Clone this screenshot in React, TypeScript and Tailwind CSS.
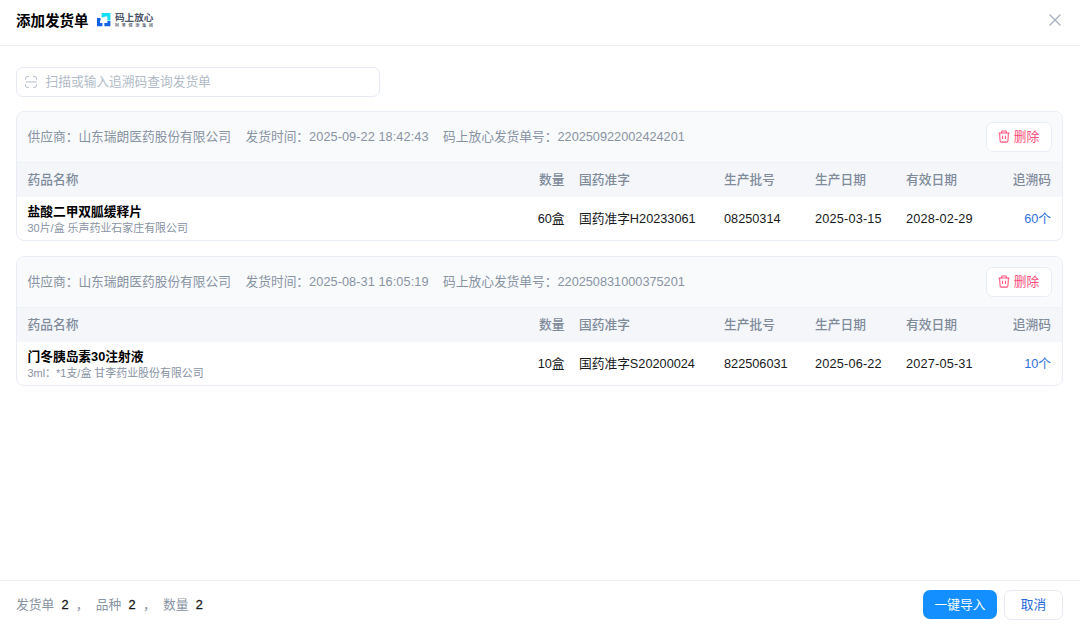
import React from "react";

type Drug = {
  name: string;
  spec: string;
  qty: string;
  approval: string;
  batch: string;
  made: string;
  expires: string;
  codes: string;
};

type Shipment = {
  supplier: string;
  time: string;
  number: string;
  drugs: Drug[];
};

const shipments: Shipment[] = [
  {
    supplier: "山东瑞朗医药股份有限公司",
    time: "2025-09-22 18:42:43",
    number: "220250922002424201",
    drugs: [
      {
        name: "盐酸二甲双胍缓释片",
        spec: "30片/盒 乐声药业石家庄有限公司",
        qty: "60盒",
        approval: "国药准字H20233061",
        batch: "08250314",
        made: "2025-03-15",
        expires: "2028-02-29",
        codes: "60个",
      },
    ],
  },
  {
    supplier: "山东瑞朗医药股份有限公司",
    time: "2025-08-31 16:05:19",
    number: "220250831000375201",
    drugs: [
      {
        name: "门冬胰岛素30注射液",
        spec: "3ml：*1支/盒 甘李药业股份有限公司",
        qty: "10盒",
        approval: "国药准字S20200024",
        batch: "822506031",
        made: "2025-06-22",
        expires: "2027-05-31",
        codes: "10个",
      },
    ],
  },
];

const columns =
  "grid grid-cols-[minmax(0,1fr)_60px_145px_91px_91px_152px] items-center pl-[10.5px] pr-[11px]";

function Logo() {
  return (
    <div className="flex items-center">
      <svg width="14" height="14" viewBox="0 0 14 14" fill="none">
        <path d="M4.6 0H13.4V7.6H10.4V3.4H7.4V4.2H4.6Z" fill="#12dff5" />
        <path d="M0 5H3.6V7.4H3V10H5.4V13.2H0Z" fill="#1262e6" />
        <path d="M10.4 7.9H13.4V13.2H7.4V10H10.4Z" fill="#1262e6" />
      </svg>
      <div className="ml-[4.5px] flex flex-col whitespace-nowrap text-[#4a5368]">
        <span className="text-[9.6px] leading-[10px] font-bold">码上放心</span>
        <span className="mt-px text-[4px] leading-[4px] font-medium tracking-[2.8px]">阿里健康集团</span>
      </div>
    </div>
  );
}

function CloseIcon() {
  return (
    <svg width="12" height="12" viewBox="0 0 12 12" stroke="#a9b2c3" strokeWidth="1.4" strokeLinecap="round">
      <path d="M1 1L11 11M11 1L1 11" />
    </svg>
  );
}

function ScanIcon() {
  return (
    <svg width="12" height="12" viewBox="0 0 12 12" fill="none" stroke="#b3bdcc" strokeWidth="1">
      <path d="M0.6 3.7V2Q0.6 0.6 2 0.6H3.8M8.2 0.6H10Q11.4 0.6 11.4 2V3.7M0.6 8.3V10Q0.6 11.4 2 11.4H3.8M8.2 11.4H10Q11.4 11.4 11.4 10V8.3M0.5 6H11.5" />
    </svg>
  );
}

function TrashIcon() {
  return (
    <svg width="12" height="13" viewBox="0 0 12 13" fill="none" stroke="#ff4d79" strokeWidth="1.05">
      <path d="M0.5 3H11.5M3.3 3L4 0.9H8L8.7 3M1.6 3L2.1 11Q2.2 12.1 3.2 12.1H8.8Q9.8 12.1 9.9 11L10.4 3M4.6 5.8V9.1M7.4 5.8V9.1" />
    </svg>
  );
}

function ShipmentCard({ item }: { item: Shipment }) {
  return (
    <section className="h-[130px] overflow-hidden rounded-[8px] border border-[#e8ecf4] bg-white">
      <div className="flex h-[51px] items-center border-b border-[#eef1f6] bg-[#f9fafc] pr-[10.5px] pl-[10.5px] text-[#8893a3]">
        <span>供应商：{item.supplier}</span>
        <span className="ml-[14.5px]">
          发货时间：<span className="tracking-[0.07px]">{item.time}</span>
        </span>
        <span className="ml-[14.5px]">码上放心发货单号：{item.number}</span>
        <button className="ml-auto flex h-[30px] w-[66px] items-center justify-center gap-[4px] rounded-[7px] border border-[#e8ecf4] bg-white text-[#ff4d79]">
          <span className="-mt-px">
            <TrashIcon />
          </span>
          <span>删除</span>
        </button>
      </div>
      <div className={`${columns} h-[34px] bg-[#f4f6fa] font-medium text-[#808b9a]`}>
        <span>药品名称</span>
        <span className="pr-[7.5px] text-right">数量</span>
        <span className="pl-[7px]">国药准字</span>
        <span className="pl-[7px]">生产批号</span>
        <span className="pl-[7px]">生产日期</span>
        <span className="flex justify-between pl-[7px]">
          <span>有效日期</span>
          <span>追溯码</span>
        </span>
      </div>
      {item.drugs.map((drug) => (
        <div key={drug.name} className={`${columns} h-[43px] text-[#17191c]`}>
          <div className="flex flex-col pt-px">
            <span className="leading-[17px] font-bold text-black">{drug.name}</span>
            <span className="text-[10.95px] leading-[16px] text-[#8893a3]">{drug.spec}</span>
          </div>
          <span className="pr-[7.5px] text-right">{drug.qty}</span>
          <span className="pl-[7px]">{drug.approval}</span>
          <span className="pl-[7px]">{drug.batch}</span>
          <span className="pl-[7px] tracking-[0.18px]">{drug.made}</span>
          <span className="flex justify-between pl-[7px]">
            <span className="tracking-[0.18px]">{drug.expires}</span>
            <span className="text-[#2f73dc]">{drug.codes}</span>
          </span>
        </div>
      ))}
    </section>
  );
}

function Total({ label, value, last }: { label: string; value: number; last?: boolean }) {
  return (
    <span className="flex items-center">
      <span>{label}</span>
      <span className="ml-[7.3px] text-[#17191c] [-webkit-text-stroke:0.3px_#17191c]">{value}</span>
      {!last && <span className="mr-[7.3px] ml-[7.3px]">，</span>}
    </span>
  );
}

export default function App() {
  return (
    <div className="flex h-[627px] w-[1080px] flex-col overflow-hidden bg-white font-['Liberation_Sans','Noto_Sans_CJK_SC',sans-serif] text-[12.72px] leading-[18px] whitespace-nowrap">
      <header className="flex h-[46px] shrink-0 items-center border-b border-[#eceff4] pr-[19.5px] pb-[5px] pl-[16px]">
        <h1 className="mr-[8px] pt-px text-[14.5px] font-bold text-black">添加发货单</h1>
        <Logo />
        <button className="ml-auto" aria-label="关闭">
          <CloseIcon />
        </button>
      </header>
      <main className="flex min-h-0 flex-1 flex-col pt-[21px] pr-[17px] pl-[16px]">
        <div className="mb-[14px] flex h-[30px] w-[364px] shrink-0 items-center rounded-[7px] border border-[#e5eaf3] pl-[7.5px] text-[#b1bac7]">
          <ScanIcon />
          <span className="ml-[9px]">扫描或输入追溯码查询发货单</span>
        </div>
        <div className="flex flex-col gap-[15px]">
          {shipments.map((item) => (
            <ShipmentCard key={item.number} item={item} />
          ))}
        </div>
      </main>
      <footer className="flex h-[47px] shrink-0 items-center border-t border-[#eceff4] pt-px pr-[17px] pl-[16px] text-[#8893a3]">
        <Total label="发货单" value={2} />
        <Total label="品种" value={2} />
        <Total label="数量" value={2} last />
        <button className="ml-auto h-[29px] w-[74px] rounded-[7px] bg-[#148fff] text-white">一键导入</button>
        <button className="ml-[7px] h-[30px] w-[59px] rounded-[7px] border border-[#e5eaf3] bg-white text-[#2468dc]">
          取消
        </button>
      </footer>
    </div>
  );
}
